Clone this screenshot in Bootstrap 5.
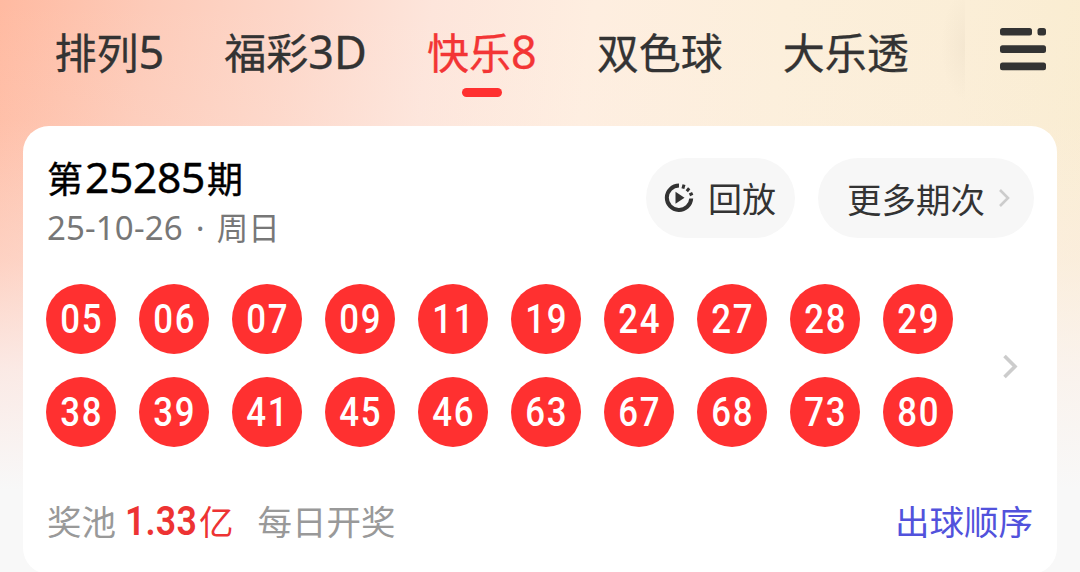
<!DOCTYPE html>
<html lang="zh-CN">
<head>
<meta charset="utf-8">
<meta name="viewport" content="width=device-width, initial-scale=1">
<title>快乐8</title>
<link href="https://cdn.jsdelivr.net/npm/bootstrap@5.3.0/dist/css/bootstrap.min.css" rel="stylesheet">
<style>
  body {
    height: 572px; overflow: hidden; color: #333;
    font-family: "Noto Sans CJK SC", sans-serif;
    background:
      linear-gradient(180deg, rgba(248,248,248,0) 0, rgba(253,240,236,.08) 120px, rgba(252,240,238,.4) 260px, rgba(250,244,244,.8) 370px, #f8f8f8 490px),
      linear-gradient(97deg, #ffbaa1 0, #fdcbb9 150px, #fdd7c9 290px, #fde5db 430px, #feeee0 590px, #fcefdb 780px, #fbeed7 960px, #f9ecce 100%);
  }
  .latin { font-family: "Noto Sans", sans-serif; }
  .topbar { height: 126px; }
  .tabs { gap: 60px; padding-left: 54.5px; width: 965px; height: 104px; }
  .tabs a { color: #333; font-size: 42px; line-height: 60px; padding-top: 21px; -webkit-text-stroke: .3px; white-space: nowrap; }
  .tabs .latin { font-size: 45px; line-height: 1; }
  .tabs a.active { color: #f33535; }
  .tabs a.active::after { content: ""; position: absolute; left: 50%; top: 88px; width: 40px; height: 9px; margin-left: -20px; border-radius: 5px; background: #ff3030; }
  .edge { width: 26px; margin-left: -26px; height: 110px; background: radial-gradient(ellipse 24px 55px at 100% 42%, rgba(120,100,80,.05), transparent); }
  .menu { margin: 27px 0 0 34px; }
  .draw { margin: 0 23px; width: 1034px; height: 448px; background: #fff; border-radius: 26px; padding: 0 23px 0 24px; }
  .head { height: 158px; }
  .issue { color: #000; font-size: 36px; line-height: 48px; margin-top: 27px; -webkit-text-stroke: .4px; white-space: nowrap; }
  .issue .latin { font-size: 42.5px; line-height: 1; letter-spacing: -.3px; margin: 0 2px; }
  .date { color: #777; font-size: 31.5px; line-height: 40px; margin-top: 5px; white-space: nowrap; }
  .date .latin { font-size: 33px; line-height: 1; letter-spacing: .15px; }
  .date .dot { margin: 0 12px 0 13px; }
  .pill { height: 80px; margin-top: 32px; background: #f7f7f7; border-radius: 40px; color: #333; font-size: 34.5px; line-height: 80px; border: 0; white-space: nowrap; }
  .replay { width: 149px; margin-right: 23px; padding: 0 0 0 17px; }
  .replay span { margin-left: 12px; font-size: 34px; }
  .more { width: 216px; padding: 0 0 0 29px; }
  .balls { display: grid; grid-template-columns: repeat(10, 70px); gap: 23px; margin-left: -1px; }
  .ball { width: 70px; height: 70px; background: #ff3030; color: #fff; font: 500 40px/71px Roboto, sans-serif; text-align: center; }
  .ball span { display: block; letter-spacing: 2px; padding-left: 1.6px; transform: scaleX(.87); }
  .foot { margin-top: 47px; height: 52px; font-size: 34.5px; line-height: 52px; color: #999; white-space: nowrap; }
  .pool { color: #ed3333; margin-left: 9px; }
  .pool b { display: inline-block; width: 74px; font: 600 41px/1 Roboto, sans-serif; letter-spacing: .2px; transform: scaleX(.87); transform-origin: 0 50%; }
  .every { margin-left: 24px; }
  .order { color: #5252dc; margin-right: 1px; }
</style>
</head>
<body>
<header class="topbar d-flex align-items-start">
  <nav class="tabs nav flex-nowrap">
    <a class="text-decoration-none position-relative">排列<span class="latin">5</span></a>
    <a class="text-decoration-none position-relative">福彩<span class="latin">3D</span></a>
    <a class="text-decoration-none position-relative active">快乐<span class="latin">8</span></a>
    <a class="text-decoration-none position-relative">双色球</a>
    <a class="text-decoration-none position-relative">大乐透</a>
  </nav>
  <div class="edge"></div>
  <svg class="menu" width="48" height="44" fill="#333"><rect x="1" y="1" width="32" height="7.6" rx="2.5"/><rect x="38.5" y="1" width="8.5" height="7.6" rx="2.5"/><rect x="1" y="18.3" width="46" height="7.6" rx="2.5"/><rect x="1" y="35.6" width="46" height="7.6" rx="2.5"/></svg>
</header>
<main class="draw">
  <div class="head d-flex align-items-start">
    <div class="me-auto">
      <div class="issue">第<span class="latin">25285</span>期</div>
      <div class="date"><span class="latin">25-10-26<span class="dot">·</span></span>周日</div>
    </div>
    <button class="pill replay d-flex align-items-center">
      <svg width="33" height="32" viewBox="0 0 32 32" fill="none" stroke="#333" stroke-width="4"><path d="M15.5 3.6A12.2 12.2 0 1 0 27.7 16.5"/><path d="M19.4 6.7l1.1-4M23.3 9.2l2.4-2.9M26 12.8l3.2-1.5" stroke-width="3"/><path d="M12 9.8v12L21 15.8z" fill="#333" stroke="none"/></svg>
      <span>回放</span>
    </button>
    <button class="pill more d-flex align-items-center">更多期次<svg class="ms-2 ps-1" width="24" height="22" fill="none" stroke="#ccc" stroke-width="2.6"><path d="M3 3l8 8-8 8"/></svg></button>
  </div>
  <div class="d-flex align-items-center">
    <div class="balls">
      <div class="ball rounded-circle"><span>05</span></div><div class="ball rounded-circle"><span>06</span></div><div class="ball rounded-circle"><span>07</span></div><div class="ball rounded-circle"><span>09</span></div><div class="ball rounded-circle"><span>11</span></div><div class="ball rounded-circle"><span>19</span></div><div class="ball rounded-circle"><span>24</span></div><div class="ball rounded-circle"><span>27</span></div><div class="ball rounded-circle"><span>28</span></div><div class="ball rounded-circle"><span>29</span></div>
      <div class="ball rounded-circle"><span>38</span></div><div class="ball rounded-circle"><span>39</span></div><div class="ball rounded-circle"><span>41</span></div><div class="ball rounded-circle"><span>45</span></div><div class="ball rounded-circle"><span>46</span></div><div class="ball rounded-circle"><span>63</span></div><div class="ball rounded-circle"><span>67</span></div><div class="ball rounded-circle"><span>68</span></div><div class="ball rounded-circle"><span>73</span></div><div class="ball rounded-circle"><span>80</span></div>
    </div>
    <svg class="ms-5" width="20" height="28" fill="none" stroke="#ccc" stroke-width="3.6"><path d="M3.5 4l10.5 10.5-10.5 10.5"/></svg>
  </div>
  <div class="foot d-flex">
    <span>奖池</span><span class="pool"><b>1.33</b>亿</span><span class="every">每日开奖</span><a class="order ms-auto text-decoration-none">出球顺序</a>
  </div>
</main>
<script src="https://cdn.jsdelivr.net/npm/bootstrap@5.3.0/dist/js/bootstrap.bundle.min.js"></script>
</body>
</html>
